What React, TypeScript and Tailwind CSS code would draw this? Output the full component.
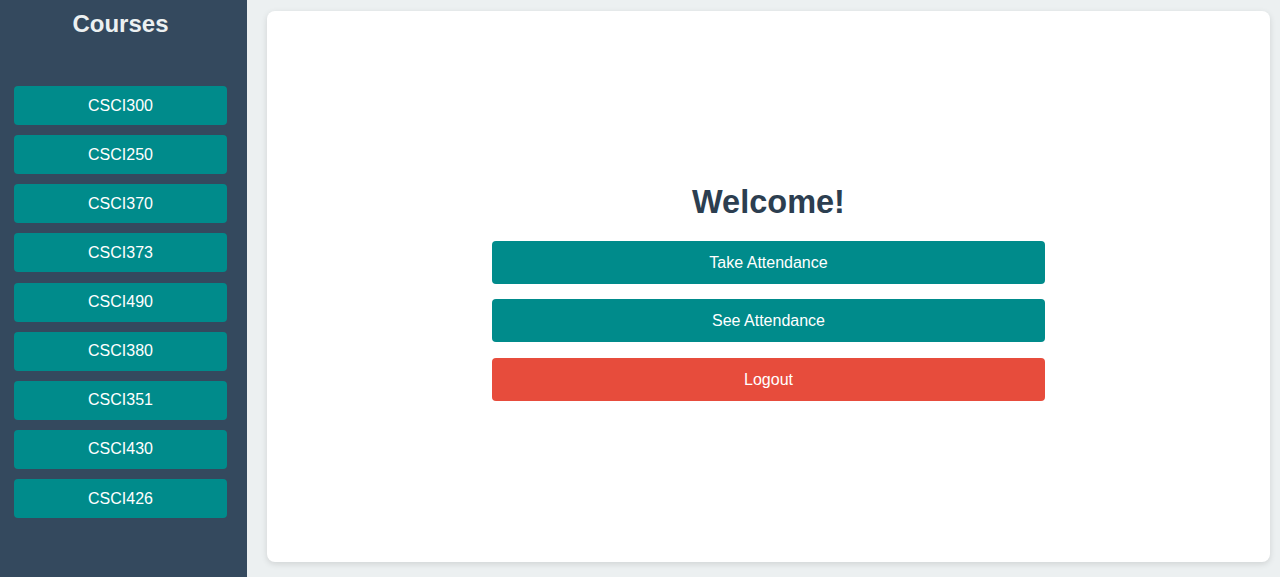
const courses = ["CSCI300", "CSCI250", "CSCI370", "CSCI373", "CSCI490", "CSCI380", "CSCI351", "CSCI430", "CSCI426"];

export default function App() {
  return (
    <div className="flex h-[577px] w-full bg-[#ecf0f1] font-['Liberation_Sans',Arial,sans-serif]">
      <aside className="w-[247px] shrink-0 bg-[#34495e] pl-[14px] pr-[20px] pt-[10px]">
        <h2 className="text-center text-[24px] font-bold leading-[28px] text-[#ecf0f1]">Courses</h2>
        <div className="mt-[48px] flex flex-col gap-[10.15px]">
          {courses.map((c) => (
            <button
              key={c}
              type="button"
              className="h-[39px] w-full rounded-[4px] bg-[#008b8b] text-[16px] text-white"
            >
              {c}
            </button>
          ))}
        </div>
      </aside>

      <main className="flex-1 pl-[20px] pr-[10px] pt-[11px] pb-[15px]">
        <div className="flex h-full flex-col items-center rounded-[8px] bg-white pt-[173px] shadow-[0_2px_6px_rgba(0,0,0,0.12)]">
          <h1 className="text-[32.5px] font-bold leading-[37px] text-[#2c3e50]">Welcome!</h1>
          <div className="mt-[20px] flex w-[553px] flex-col">
            <button type="button" className="h-[43px] w-full rounded-[4px] bg-[#008b8b] text-[16px] text-white">
              Take Attendance
            </button>
            <button type="button" className="mt-[15px] h-[43px] w-full rounded-[4px] bg-[#008b8b] text-[16px] text-white">
              See Attendance
            </button>
            <button type="button" className="mt-[16px] h-[43px] w-full rounded-[4px] bg-[#e74c3c] text-[16px] text-white">
              Logout
            </button>
          </div>
        </div>
      </main>
    </div>
  );
}
